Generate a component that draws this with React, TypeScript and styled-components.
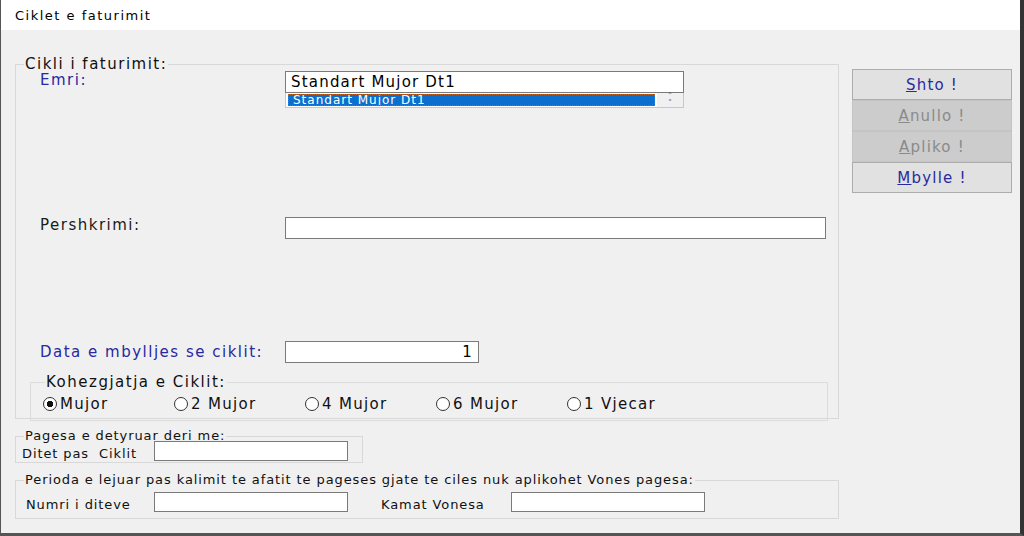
import React from "react";
import styled, { createGlobalStyle } from "styled-components";

const G = createGlobalStyle`
  html, body { margin: 0; padding: 0; background: #fff; }
  body { font-family: "DejaVu Sans", "Liberation Sans", sans-serif; }
`;
const Win = styled.div`
  width: 1024px; height: 536px; box-sizing: border-box; display: flex; flex-direction: column;
  border-left: 1px solid #555; border-right: 4px solid #333; border-bottom: 3px solid #555; background: #f0f0f0;
`;
const Title = styled.div`
  height: 30px; background: #fff; font-size: 13px; letter-spacing: 1.5px; color: #000; padding-left: 14px; display: flex; align-items: center;
`;
const Body = styled.div`
  flex: 1; display: grid; grid-template-columns: 824px 160px; column-gap: 13px; padding: 27px 0 0 14px;
`;
const Left = styled.div` display: flex; flex-direction: column; `;
const Frame = styled.fieldset<{ $w?: number; $h: number; $fs?: number; $mt?: number }>`
  margin: ${p => p.$mt ?? 0}px 0 0 0; padding: 0 0 0 14px; width: ${p => p.$w ?? 824}px; height: ${p => p.$h}px; box-sizing: border-box;
  border: 1px solid #d8d8d8; position: relative;
  legend { font-size: ${p => p.$fs ?? 15}px; letter-spacing: ${p => ((p.$fs ?? 15) === 15 ? 1.5 : 0.9)}px; color: #111; padding: 0 1px; margin-left: -6px; line-height: 14px; }
`;
const Row = styled.div<{ $h: number }>`
  display: flex; align-items: flex-start; height: ${p => p.$h}px;
`;
const Label = styled.div<{ $blue?: boolean; $mt?: number }>`
  width: 245px; font-size: 15px; letter-spacing: 1.5px; color: ${p => (p.$blue ? "#2828a0" : "#1a1a1a")}; padding-left: 10px; margin-top: ${p => p.$mt ?? 0}px;
`;
const Input = styled.div<{ $w: number; $right?: boolean }>`
  width: ${p => p.$w}px; height: 22px; box-sizing: border-box; background: #fff; border: 1px solid #7a7a7a;
  font-size: 15px; letter-spacing: 1.2px; line-height: 20px; padding: 0 5px; text-align: ${p => (p.$right ? "right" : "left")}; color: #000;
`;
const Combo = styled.div` display: flex; flex-direction: column; `;
const List = styled.div`
  width: 399px; height: 15px; display: flex; border: 1px solid #c8c8c8; border-top: none; box-sizing: border-box; background: #fff;
`;
const Sel = styled.div`
  flex: 1; background: #0a6fcf; color: #fff; font-size: 12px; letter-spacing: 1px; line-height: 11px; padding-left: 4px; border: 1px dotted #c06020; margin: 1px 2px;
  white-space: nowrap; overflow: hidden;
`;
const Spin = styled.div`
  width: 26px; background: #f0f0f0; font-size: 8px; color: #555; text-align: center; line-height: 7px;
`;
const Inner = styled.fieldset`
  margin: 0; padding: 0 0 0 12px; width: 798px; height: 46px; box-sizing: border-box; border: 1px solid #dcdcdc;
  legend { font-size: 15px; letter-spacing: 1.5px; color: #111; padding: 0 1px; margin-left: 2px; line-height: 14px; }
`;
const Radios = styled.div` display: flex; margin-top: 6px; `;
const Radio = styled.div<{ $on?: boolean }>`
  width: 131px; display: flex; align-items: center; gap: 3px; font-size: 15px; letter-spacing: 1.3px; color: #111;
  &::before { content: ""; width: 14px; height: 14px; border: 1px solid #333; border-radius: 50%; box-sizing: border-box; flex: none;
    background: ${p => (p.$on ? "radial-gradient(circle, #111 0 3px, #fff 3.5px)" : "#fff")}; }
`;
const Small = styled.div<{ $ml?: number; $w?: number }>`
  font-size: 13px; letter-spacing: 0.9px; color: #111; margin-left: ${p => p.$ml ?? 0}px; width: ${p => (p.$w ? p.$w + "px" : "auto")}; white-space: nowrap;
`;
const SmallInput = styled.div<{ $w: number }>` width: ${p => p.$w}px; height: 20px; box-sizing: border-box; background: #fff; border: 1px solid #7a7a7a; `;
const SRow = styled.div<{ $mt: number }>` display: flex; align-items: flex-end; margin-top: ${p => p.$mt}px; margin-left: -8px; `;
const Buttons = styled.div` display: flex; flex-direction: column; margin-top: 12px; `;
const Btn = styled.div<{ $dis?: boolean }>`
  height: 31px; box-sizing: border-box; border: 1px solid ${p => (p.$dis ? "#c4c4c4" : "#adadad")};
  background: ${p => (p.$dis ? "#cccccc" : "#e1e1e1")}; color: ${p => (p.$dis ? "#8a8a8a" : "#2a2aa0")};
  font-size: 15px; letter-spacing: 1.2px; display: flex; align-items: center; justify-content: center;
`;

export default function App() {
  return (
    <Win>
      <G />
      <Title>Ciklet e faturimit</Title>
      <Body>
        <Left>
          <Frame $h={362}>
            <legend>Cikli i faturimit:</legend>
            <Row $h={146}>
              <Label $blue>Emri:</Label>
              <Combo>
                <Input $w={399}>Standart Mujor Dt1</Input>
                <List><Sel>Standart Mujor Dt1</Sel><Spin>˄<br />˅</Spin></List>
              </Combo>
            </Row>
            <Row $h={124}>
              <Label $mt={-1}>Pershkrimi:</Label>
              <Input $w={541} />
            </Row>
            <Row $h={34}>
              <Label $blue $mt={2}>Data e mbylljes se ciklit:</Label>
              <Input $w={194} $right>1</Input>
            </Row>
            <Inner>
              <legend>Kohezgjatja e Ciklit:</legend>
              <Radios>
                <Radio $on>Mujor</Radio>
                <Radio>2 Mujor</Radio>
                <Radio>4 Mujor</Radio>
                <Radio>6 Mujor</Radio>
                <Radio>1 Vjecar</Radio>
              </Radios>
            </Inner>
          </Frame>
          <Frame $w={348} $h={34} $fs={13} $mt={10}>
            <legend>Pagesa e detyruar deri me:</legend>
            <SRow $mt={-2}><Small $w={132}>Ditet pas&nbsp; Ciklit</Small><SmallInput $w={194} /></SRow>
          </Frame>
          <Frame $h={46} $fs={13} $mt={10}>
            <legend>Perioda e lejuar pas kalimit te afatit te pageses gjate te ciles nuk aplikohet Vones pagesa:</legend>
            <SRow $mt={5}><Small $ml={4} $w={128}>Numri i diteve</Small><SmallInput $w={194} /><Small $ml={33} $w={130}>Kamat Vonesa</Small><SmallInput $w={194} /></SRow>
          </Frame>
        </Left>
        <Buttons>
          <Btn><span><u>S</u>hto !</span></Btn>
          <Btn $dis><span><u>A</u>nullo !</span></Btn>
          <Btn $dis><span><u>A</u>pliko !</span></Btn>
          <Btn><span><u>M</u>bylle !</span></Btn>
        </Buttons>
      </Body>
    </Win>
  );
}
